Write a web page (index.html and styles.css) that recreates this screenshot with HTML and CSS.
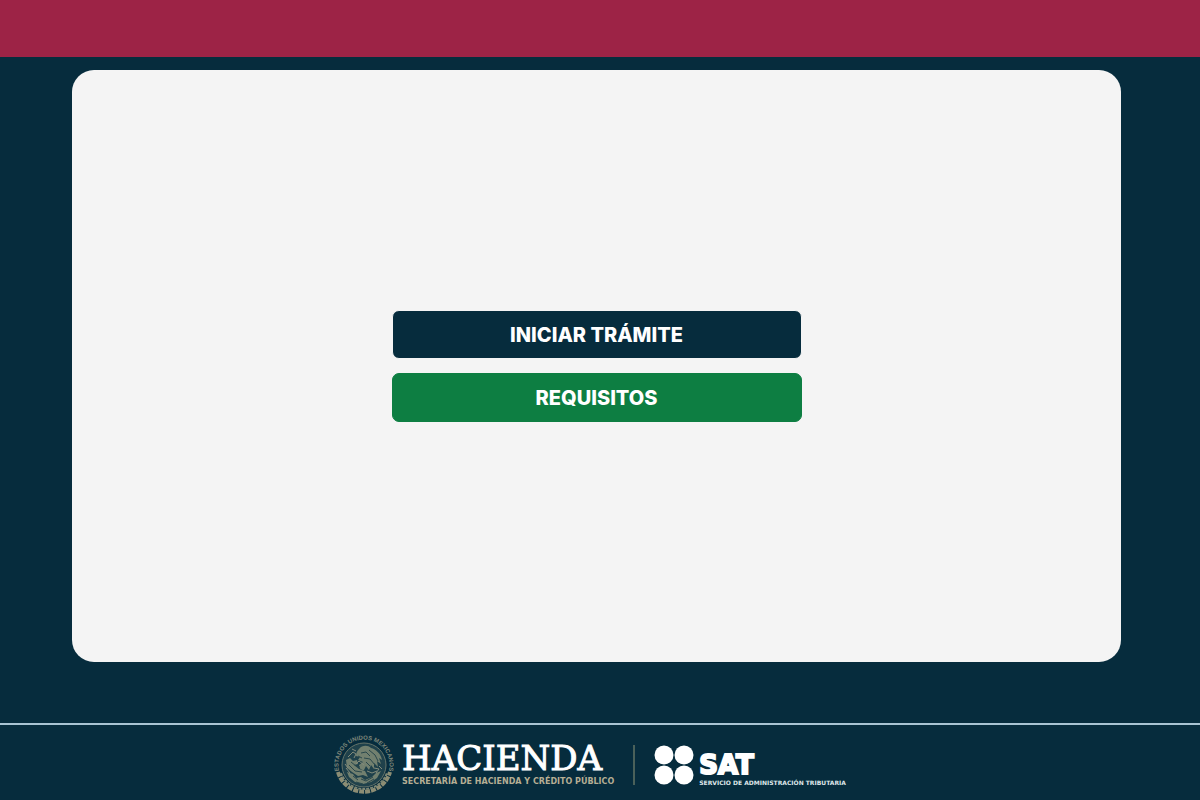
FILE: index.html
```
<!DOCTYPE html>
<html lang="es">
<head>
<meta charset="utf-8">
<meta name="viewport" content="width=device-width, initial-scale=1">
<title>SAT</title>
<link rel="stylesheet" href="styles.css">
</head>
<body>
<header class="topbar"></header>
<main class="content">
  <section class="panel">
    <button type="button" class="btn btn-primary">INICIAR TRÁMITE</button>
    <button type="button" class="btn btn-success">REQUISITOS</button>
  </section>
</main>
<footer class="footer">
  <svg class="seal" viewBox="0 0 60 60" aria-hidden="true">
    <defs><path id="arc" d="M7 41A25.500 25.500 0 1 1 53 41"/></defs>
    <text class="seal-text"><textPath href="#arc" startOffset="50%" text-anchor="middle">ESTADOS UNIDOS MEXICANOS</textPath></text>
    <path class="seal-dots" d="M4 37A27 27 0 0 0 56 37"/>
    <path class="seal-leaf" d="M7 38A24.500 24.500 0 0 0 53 38"/>
    <circle class="seal-disc" cx="30" cy="30" r="22"/>
    <g class="seal-fill">
      <path d="M25 14c3-4 9-4 12-1 5 1 10 6 11 12l-3-2 2 6-4-3 1 6-4-4 0 6-3-4-2 5-3-4-2 4c-3 0-5-2-5-5l4-3-5-2 2-3-4-1c0-3 1-5 3-7z"/>
      <path d="M12 25l4-2 3 3 4-1 1 4-4 1 5 4 6 2 3 6-5-2-5 1-6-4-5-4z"/>
      <path d="M13 37l6 2 3 4 5-1 4 3 7-3 4-4 5-2-4 7-6 4-8 2-8-2-6-5z"/>
    </g>
    <g class="seal-cut">
      <path d="M27 18l5-1 4 4M30 23l6 1 5 6M35 15l6 5 3 6M32 27l4 4M24 21l4 2M17 27l5 4 4 1M15 30l6 6 7 1M19 41l5 4M27 44l5 2 7-4M33 48l7-4M22 47l7 2"/>
    </g>
    <g class="seal-line">
      <path d="M14 22l5-5 3 2-2 4M40 33l5 1-3 4M33 36l5 2 5-2M12 33l4 5M45 31l3 3M22 29l3-3 5 4M18 14l4 2M11 29l3 4"/>
    </g>
  </svg>
  <div class="brand">
    <span class="brand-name">HACIENDA</span>
    <span class="brand-sub">SECRETARÍA DE HACIENDA Y CRÉDITO PÚBLICO</span>
  </div>
  <div class="divider"></div>
  <svg class="dots" viewBox="0 0 40 40" aria-hidden="true">
    <circle cx="10" cy="10" r="9.500"/><circle cx="30" cy="10" r="9.500"/>
    <circle cx="10" cy="30" r="9.500"/><circle cx="30" cy="30" r="9.500"/>
  </svg>
  <div class="sat">
    <span class="sat-name">SAT</span>
    <span class="sat-sub">SERVICIO DE ADMINISTRACIÓN TRIBUTARIA</span>
  </div>
</footer>
</body>
</html>
```
FILE: styles.css
```
* { box-sizing: border-box; }

body {
  margin: 0;
  min-height: 100vh;
  display: flex;
  flex-direction: column;
  background: #062c3d;
  font-family: Inter, "Liberation Sans", sans-serif;
}

.topbar { height: 57px; background: #9d2346; }

.content {
  flex: 1;
  display: flex;
  padding: 13px 79px 61px 72px;
}

.panel {
  flex: 1;
  display: flex;
  flex-direction: column;
  align-items: center;
  justify-content: center;
  gap: 14px;
  padding: 24px;
  background: #f4f4f4;
  border-radius: 22px;
}

.btn {
  width: 100%;
  max-width: 410px;
  height: 49px;
  padding: 0;
  border: 1px solid;
  border-radius: 7px;
  color: #fff;
  font-family: inherit;
  font-size: 20px;
  font-weight: 800;
  line-height: 24px;
  cursor: pointer;
}

.btn-primary { background: #062c3d; border-color: #f4f4f4; }
.btn-success { background: #0d7e42; border-color: #0d7e42; }

.footer {
  display: flex;
  align-items: center;
  justify-content: center;
  height: 77px;
  padding: 4px 20px 0 0;
  border-top: 2px solid #a9c4d3;
}

.seal { width: 60px; height: 60px; margin-right: 8px; }
.seal-text { font: bold 6px "Liberation Sans", sans-serif; fill: #7f877a; }
.seal-dots { fill: none; stroke: #8c8d74; stroke-width: 4; stroke-dasharray: 5 1; }
.seal-leaf { fill: none; stroke: #7c8674; stroke-width: 2; stroke-dasharray: 3 1; }
.seal-disc { fill: #1f414b; stroke: #66746a; stroke-width: 1; }
.seal-fill { fill: #72806f; }
.seal-cut { fill: none; stroke: #29474c; stroke-width: 1; }
.seal-line { fill: none; stroke: #838b7b; stroke-width: 1; }

.brand, .sat { display: flex; flex-direction: column; white-space: nowrap; }
.brand-name {
  font-family: "DejaVu Serif", serif;
  font-size: 34px;
  line-height: 32px;
  color: #fff;
  -webkit-text-stroke: 1px #fff;
}
.brand-sub {
  padding-top: 2px;
  font-family: "DejaVu Sans", sans-serif;
  font-size: 8px;
  font-weight: 700;
  line-height: 12px;
  color: #b5ae94;
}

.divider { width: 2px; height: 40px; margin: 0 19px; background: #4a615a; }

.dots { width: 40px; height: 40px; margin-right: 5px; fill: #fff; }

.sat-name {
  padding-top: 10px;
  font-family: "DejaVu Sans", sans-serif;
  font-size: 26px;
  font-weight: 700;
  line-height: 26px;
  color: #fff;
  -webkit-text-stroke: 2px #fff;
}
.sat-sub {
  padding-top: 1px;
  font-family: "DejaVu Sans", sans-serif;
  font-size: 6px;
  font-weight: 700;
  line-height: 8px;
  color: #dfe7ea;
}
```
